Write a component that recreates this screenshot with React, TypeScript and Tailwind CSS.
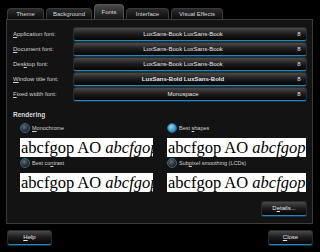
import React from "react";

const ui = { fontFamily: '"Liberation Sans", "DejaVu Sans", sans-serif' };
const serif = { fontFamily: '"Liberation Serif", "DejaVu Serif", serif' };

function U({ children }: { children: React.ReactNode }) {
  return <span className="underline underline-offset-1">{children}</span>;
}

function Tab({ label, active, w }: { label: string; active?: boolean; w: string }) {
  return (
    <div
      className={
        "flex items-center justify-center rounded-t-[4px] border border-b-0 text-[6px] text-[#d6d6d6] " +
        w +
        (active
          ? " h-[15px] border-[#555] bg-gradient-to-b from-[#4a4a4a] to-[#161616]"
          : " h-[11px] border-[#3a3a3a] bg-gradient-to-b from-[#2c2c2c] to-[#0c0c0c]")
      }
    >
      {label}
    </div>
  );
}

function Btn({ children, cls }: { children: React.ReactNode; cls: string }) {
  return (
    <div
      className={
        "flex items-center rounded-[3px] border border-[#2b2b2b] border-b-[#2b86ad] bg-gradient-to-b from-[#4b4b4b] via-[#1c1c1c] to-[#050505] text-[#e6e6e6] shadow-[0_1px_0_#0f3a4d] " +
        cls
      }
    >
      {children}
    </div>
  );
}

function FontRow({ label, font, bold }: { label: React.ReactNode; font: string; bold?: boolean }) {
  return (
    <div className="flex h-[14px] items-center">
      <div className="w-[60px] shrink-0 text-[6px] text-[#d0d0d0]">{label}</div>
      <Btn cls="h-[14px] flex-1 text-[6px]">
        <div className={"flex-1 text-center " + (bold ? "font-bold" : "")}>{font}</div>
        <div className="w-[14px] text-center">8</div>
      </Btn>
    </div>
  );
}

function Radio({ on }: { on?: boolean }) {
  return (
    <div
      className={
        "h-[10px] w-[10px] shrink-0 rounded-full border border-[#1f6f94] " +
        (on
          ? "bg-[radial-gradient(circle_at_40%_35%,#9fd6f2,#3b92c4_60%,#1d5a80)]"
          : "bg-[radial-gradient(circle_at_40%_35%,#6a6a6a,#2a2a2a_60%,#111)]")
      }
    />
  );
}

function Sample({ cls }: { cls?: string }) {
  return (
    <div
      className={"h-[19px] overflow-hidden whitespace-nowrap bg-white pl-[1px] text-[16.5px] leading-[19px] text-black " + (cls || "")}
      style={serif}
    >
      abcfgop AO <span className="italic">abcfgop</span>
    </div>
  );
}

export default function App() {
  return (
    <div className="relative h-[252px] w-[320px] overflow-hidden bg-black" style={ui}>
      <div className="flex h-[19px] items-end gap-[2px] pl-[7px]">
        <Tab label="Theme" w="w-[37px]" />
        <Tab label="Background" w="w-[46px]" />
        <Tab label="Fonts" w="w-[30px]" active />
        <Tab label="Interface" w="w-[43px]" />
        <Tab label="Visual Effects" w="w-[52px]" />
      </div>
      <div className="ml-[6px] mr-[7px] flex h-[205px] flex-col border border-[#3c3c3c] bg-[#131313] pl-[6px] pr-[5px] pt-[7px]">
        <div className="flex flex-col gap-[1px]">
          <FontRow label={<><U>A</U>pplication font:</>} font="LuxSans-Book LuxSans-Book" />
          <FontRow label={<><U>D</U>ocument font:</>} font="LuxSans-Book LuxSans-Book" />
          <FontRow label={<>Des<U>k</U>top font:</>} font="LuxSans-Book LuxSans-Book" />
          <FontRow label={<><U>W</U>indow title font:</>} font="LuxSans-Bold LuxSans-Bold" bold />
          <FontRow label={<><U>F</U>ixed width font:</>} font="Monospace" />
        </div>
        <div className="mt-[9px] text-[6.5px] font-bold text-[#d8d8d8]">Rendering</div>
        <div className="mt-[3px] grid grid-cols-[133px_139px] gap-x-[14px] pl-[7px]">
          <div className="flex flex-col">
            <div className="flex h-[11px] items-center gap-[2px] text-[5.5px] text-[#d0d0d0]">
              <Radio />
              <span><U>M</U>onochrome</span>
            </div>
            <Sample cls="mt-[4px]" />
            <div className="mt-[1px] flex h-[11px] items-center gap-[2px] text-[5.5px] text-[#d0d0d0]">
              <Radio />
              <span>Best co<U>n</U>trast</span>
            </div>
            <Sample cls="mt-[4px]" />
          </div>
          <div className="flex flex-col">
            <div className="flex h-[11px] items-center gap-[2px] text-[5.5px] text-[#d0d0d0]">
              <Radio on />
              <span>Best <U>s</U>hapes</span>
            </div>
            <Sample cls="mt-[4px]" />
            <div className="mt-[1px] flex h-[11px] items-center gap-[2px] text-[5.5px] text-[#d0d0d0]">
              <Radio />
              <span>Sub<U>p</U>ixel smoothing (LCDs)</span>
            </div>
            <Sample cls="mt-[4px]" />
          </div>
        </div>
        <div className="mt-[9px] flex justify-end">
          <Btn cls="h-[15px] w-[46px] justify-center text-[6px]">
            <span>D<U>e</U>tails...</span>
          </Btn>
        </div>
      </div>
      <div className="mt-[6px] flex justify-between pl-[7px] pr-[7px]">
        <Btn cls="h-[15px] w-[45px] justify-center text-[6px]">
          <span><U>H</U>elp</span>
        </Btn>
        <Btn cls="h-[15px] w-[45px] justify-center text-[6px]">
          <span><U>C</U>lose</span>
        </Btn>
      </div>
    </div>
  );
}
